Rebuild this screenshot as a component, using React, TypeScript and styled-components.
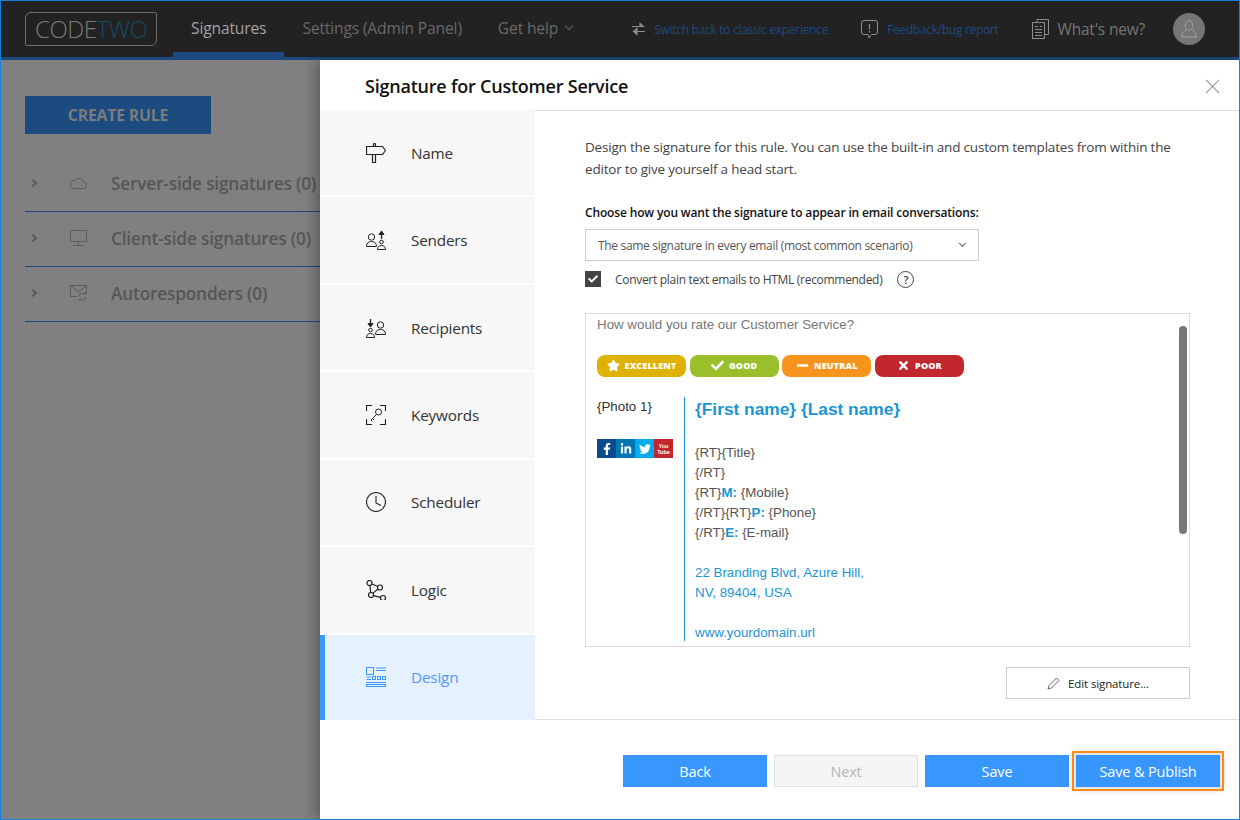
import React from 'react'
import styled, { createGlobalStyle } from 'styled-components'
import { FaStar, FaCheck, FaMinus, FaTimes, FaFacebookF, FaLinkedinIn, FaTwitter } from 'react-icons/fa'

const GlobalStyle = createGlobalStyle`
  html, body { margin: 0; padding: 0; background: #808080; }
  * { box-sizing: border-box; }
  body { font-family: "Open Sans", "Noto Sans", sans-serif; }
`

const Icon: React.FC<{ size?: number; w?: number; h?: number; color?: string; children: React.ReactNode }> = ({ size = 20, w, h, color = '#222', children }) => (
  <svg width={w || size} height={h || size} viewBox={`0 0 ${w || size} ${h || size}`} fill="none" stroke={color} strokeWidth="1" style={{ flex: 'none', display: 'block' }}>
    {children}
  </svg>
)

const SignpostIcon = () => (
  <Icon>
    <path d="M7.5 3.5V1.5a1 1 0 0 1 2 0V3.5M.5 3.5H16.5L19.5 7.5L16.5 11.5H.5ZM6.5 11.5V19.5H9.5V11.5" strokeWidth="1.2" />
  </Icon>
)
const SendersIcon = () => (
  <Icon>
    <circle cx="5.5" cy="7" r="3.2" />
    <path d="M.5 16.5c0-3.5 2-5 5-5s5 1.500 5 5Z" />
    <path d="M15.500 9V3" strokeWidth="1.300" />
    <path d="M13 4.500L15.500 1L18 4.500Z" fill="#222" />
    <circle cx="15.500" cy="12" r="1.800" />
    <path d="M11.500 19.500c0-2.500 1.500-4 4-4s4 1.500 4 4Z" />
  </Icon>
)
const RecipientsIcon = () => (
  <Icon>
    <circle cx="14.500" cy="7" r="3.200" />
    <path d="M9.500 16.500c0-3.500 2-5 5-5s5 1.500 5 5Z" />
    <path d="M4.500 1V6.500" strokeWidth="1.300" />
    <path d="M2 5.500L4.500 9L7 5.500Z" fill="#222" />
    <circle cx="4.500" cy="12" r="1.800" />
    <path d="M.5 19.500c0-2.500 1.500-4 4-4s4 1.500 4 4Z" />
  </Icon>
)
const KeywordsIcon = () => (
  <Icon>
    <path d="M.5 6V.5H6M14 .5H19.500V6M.5 14V19.500H6M14 19.500H19.500V14" strokeWidth="1.200" />
    <circle cx="12.500" cy="7" r="3" />
    <path d="M10.500 9.500L5 15M6.500 13.500L8 15M5 15L6.500 16.500" />
  </Icon>
)
const ClockIcon = () => (
  <Icon>
    <circle cx="10" cy="10" r="9.500" strokeWidth="1.100" />
    <path d="M10 4V11L15 13.500" strokeWidth="1.100" />
  </Icon>
)
const LogicIcon = () => (
  <Icon>
    <circle cx="3.500" cy="3" r="2.500" strokeWidth="1.200" />
    <circle cx="14" cy="7.500" r="2.500" strokeWidth="1.200" />
    <circle cx="5" cy="15" r="2.500" strokeWidth="1.200" />
    <circle cx="17" cy="18" r="2.500" strokeWidth="1.200" />
    <path d="M6 4L11.700 6.500M3.900 5.500L4.700 12.500M6.800 13.400L12 9M7.400 15.700L14.600 17.400" strokeWidth="1.200" />
  </Icon>
)
const DesignIcon = () => (
  <Icon color="#3896ff">
    <rect x=".5" y=".5" width="7" height="7" />
    <path d="M10 1H20M10 3.500H20M.5 10H5M.5 12.500H5" strokeWidth="1" />
    <rect x="6.500" y="9.500" width="3" height="3" />
    <rect x="11.500" y="9.500" width="3" height="3" />
    <rect x="16.500" y="9.500" width="3" height="3" />
    <path d="M0 15.500H20" />
    <rect x=".5" y="17.500" width="19" height="2" />
  </Icon>
)
const CloudIcon = () => (
  <Icon w={17} h={12} color="#5c5c5c">
    <path d="M4 11.500H13.500a3 3 0 0 0 .5-6A5 5 0 0 0 5 3.500a4 4 0 0 0-1 8Z" />
  </Icon>
)
const MonitorIcon = () => (
  <Icon w={17} h={16} color="#5c5c5c">
    <rect x=".5" y=".5" width="16" height="11" />
    <path d="M8.500 11.500V15M3.500 15.500H13.500" />
  </Icon>
)
const AutoIcon = () => (
  <Icon w={17} h={16} color="#5c5c5c">
    <path d="M7 11.500H.5V.5H16.500V8M.5 .5L8.500 7L16.500 .5" />
    <path d="M9 11a3 3 0 0 1 3-2.500H16M14.500 7L16 8.500L14.500 10M15.500 12a3 3 0 0 1-3 3H9M10.500 13.500L9 15L10.500 16.500" />
  </Icon>
)
const SwapIcon = () => (
  <Icon w={13} h={14} color="#8c8c8c">
    <path d="M0 4.500H10M8 1.500L11.500 4.500H8ZM13 9.500H3M5 6.500L1.500 9.500L5 12.500Z" fill="#8c8c8c" strokeWidth="1.200" />
  </Icon>
)
const FeedbackIcon = () => (
  <Icon w={17} h={19} color="#8c8c8c">
    <path d="M3 .5H14a2.500 2.500 0 0 1 2.500 2.500V12a2.500 2.500 0 0 1-2.500 2.500H10.500L8 18L7 14.500H3A2.500 2.500 0 0 1 .5 12V3A2.500 2.500 0 0 1 3 .5Z" />
    <path d="M8.500 4V9.500M8.500 11V12.500" strokeWidth="1.300" />
  </Icon>
)
const NewsIcon = () => (
  <Icon w={17} h={20} color="#8c8c8c">
    <path d="M5 3V.5H16.500V15.500H13" />
    <rect x=".5" y="3.500" width="12" height="16" />
    <path d="M3 7.500H6M3 10.500H10M3 13.500H10M3 16.500H10M8 7.500H10" />
  </Icon>
)
const PersonIcon = () => (
  <Icon w={16} h={18} color="#a3a3a3">
    <ellipse cx="8" cy="5.500" rx="3.800" ry="4.800" />
    <path d="M5.500 9.500C3 11 .8 13 .8 17H15.200C15.200 13 13 11 10.500 9.500" />
  </Icon>
)
const Chevron = styled.span<{ $color: string; $size?: number; $width?: number }>`
  display: inline-block;
  width: ${p => p.$size || 6}px;
  height: ${p => p.$size || 6}px;
  border-right: ${p => p.$width || 1}px solid ${p => p.$color};
  border-bottom: ${p => p.$width || 1}px solid ${p => p.$color};
  transform: rotate(45deg);
`

const Frame = styled.div`
  position: relative;
  width: 1240px;
  height: 820px;
  overflow: hidden;
  background: #808080;
  border: 1px solid #1a7fd8;
  display: flex;
  flex-direction: column;
`
const TopBar = styled.header`
  height: 59px;
  flex: none;
  background: #222;
  border-bottom: 3px solid #1c4a80;
  display: flex;
  align-items: stretch;
  padding-left: 24px;
`
const Logo = styled.div`
  align-self: flex-start;
  margin-top: 11px;
  width: 132px;
  height: 34px;
  border: 1px solid #6e6e6e;
  border-radius: 6px 2px 6px 2px;
  font-size: 24px;
  font-weight: 300;
  line-height: 32px;
  padding-left: 9px;
  color: #7a7a7a;
  letter-spacing: -0.5px;
  span { color: #174a66; }
`
const NavTabs = styled.nav`
  display: flex;
  margin-left: 16px;
`
const NavTab = styled.div<{ $active?: boolean }>`
  height: 56px;
  padding: 2px 18px 0;
  display: flex;
  align-items: center;
  gap: 8px;
  font-size: 15.600px;
  color: ${p => (p.$active ? '#a3a3a3' : '#696969')};
  border-bottom: 5px solid ${p => (p.$active ? '#1c4a80' : 'transparent')};
  letter-spacing: -0.15px;
  white-space: nowrap;
`
const TopActions = styled.div`
  margin-left: auto;
  display: flex;
  align-items: center;
  padding-right: 34px;
  height: 56px;
`
const TopLink = styled.a<{ $gap: number; $left: number }>`
  display: flex;
  align-items: center;
  gap: ${p => p.$gap}px;
  margin-left: ${p => p.$left}px;
  font-size: 12px;
  color: #1c4a80;
  letter-spacing: -0.3px;
  white-space: nowrap;
`
const WhatsNew = styled(TopLink)`
  font-size: 15.500px;
  color: #767676;
  letter-spacing: -0.2px;
`
const Avatar = styled.div`
  width: 32px;
  height: 32px;
  margin-left: 28px;
  border-radius: 50%;
  background: #767676;
  display: flex;
  align-items: center;
  justify-content: center;
`
const Page = styled.main`
  flex: 1;
  padding: 36px 0 0 24px;
`
const CreateRule = styled.div`
  width: 186px;
  height: 38px;
  background: #1c4b80;
  color: #7b7b7b;
  font-size: 15.800px;
  font-weight: 700;
  display: flex;
  align-items: center;
  justify-content: center;
  letter-spacing: -0.2px;
  margin-bottom: 23px;
`
const RuleRow = styled.div`
  height: 55px;
  border-bottom: 1px solid #1c4a80;
  padding-bottom: 2px;
  display: flex;
  align-items: center;
  font-size: 17.300px;
  font-weight: 600;
  color: #565656;
  letter-spacing: -0.2px;
  white-space: nowrap;
`
const RowChevron = styled.span`
  width: 45px;
  padding-left: 5px;
  span { transform: rotate(-45deg); display: block; }
`
const RowIcon = styled.span`
  width: 41px;
`
const Drawer = styled.section`
  position: absolute;
  left: 319px;
  top: 59px;
  right: 0;
  bottom: 0;
  background: #fff;
  box-shadow: -4px 0 12px rgba(0, 0, 0, 0.3);
  display: flex;
  flex-direction: column;
`
const DrawerTitle = styled.div`
  height: 50px;
  flex: none;
  padding: 2px 19px 0 45px;
  display: flex;
  align-items: center;
  justify-content: space-between;
  font-size: 18px;
  font-weight: 600;
  color: #111;
  letter-spacing: -0.22px;
`
const CloseButton = styled.svg`
  width: 15px;
  height: 15px;
  stroke: #9c9c9c;
  stroke-width: 1.300;
`
const DrawerBody = styled.div`
  flex: 1;
  display: flex;
  min-height: 0;
`
const Steps = styled.aside`
  position: relative;
  width: 215px;
  flex: none;
  display: flex;
  flex-direction: column;
  gap: 2px;
  margin-bottom: -1px;
`
const Step = styled.div<{ $active?: boolean }>`
  flex: 1;
  display: flex;
  align-items: center;
  gap: 25px;
  padding-left: ${p => (p.$active ? 41 : 46)}px;
  background: ${p => (p.$active ? '#e5f1ff' : '#f7f7f7')};
  border-left: ${p => (p.$active ? '5px solid #3896ff' : 'none')};
  color: ${p => (p.$active ? '#4f98ff' : '#333')};
  font-size: 15.300px;
  letter-spacing: -0.2px;
`
const Content = styled.div`
  flex: 1;
  padding: 25px 49px 0 50px;
  border-top: 1px solid #ddd;
`
const Intro = styled.p`
  margin: 0;
  font-size: 13.500px;
  line-height: 22px;
  color: #444;
  letter-spacing: -0.2px;
`
const FieldLabel = styled.div`
  margin-top: 24px;
  font-size: 12px;
  line-height: 18px;
  font-weight: 600;
  color: #111;
  letter-spacing: -0.15px;
`
const SelectBox = styled.div`
  margin-top: 7px;
  width: 394px;
  height: 32px;
  border: 1px solid #ccc;
  padding: 0 13px 0 12px;
  display: flex;
  align-items: center;
  justify-content: space-between;
  font-size: 12px;
  color: #555;
  letter-spacing: -0.32px;
`
const CheckRow = styled.div`
  margin-top: 10px;
  height: 16px;
  display: flex;
  align-items: center;
  font-size: 12px;
  color: #444;
  letter-spacing: -0.3px;
`
const CheckBox = styled.span`
  width: 16px;
  height: 16px;
  background: #444;
  color: #fff;
  display: flex;
  align-items: center;
  justify-content: center;
  font-size: 10px;
  margin-right: 14px;
`
const HelpBadge = styled.span`
  width: 17px;
  height: 17px;
  border: 1px solid #444;
  border-radius: 50%;
  margin-left: 15px;
  display: flex;
  align-items: center;
  justify-content: center;
  font-size: 11px;
  font-weight: 600;
  color: #444;
`
const Preview = styled.div`
  position: relative;
  margin-top: 26px;
  height: 334px;
  border: 1px solid #ddd;
  padding: 0 11px;
  font-family: "Liberation Sans", Arial, sans-serif;
  overflow: hidden;
`
const Scrollbar = styled.div`
  position: absolute;
  top: 12px;
  right: 2px;
  width: 8px;
  height: 208px;
  border-radius: 4px;
  background: #777;
`
const Question = styled.div`
  font-size: 13.330px;
  line-height: 20px;
  padding-top: 1px;
  height: 20px;
  color: #777;
`
const Pills = styled.div`
  margin-top: 21px;
  display: flex;
  gap: 3.670px;
`
const Pill = styled.div<{ $bg: string }>`
  width: 89px;
  height: 22px;
  border-radius: 8px;
  padding-bottom: 1px;
  background: ${p => p.$bg};
  color: #fff;
  display: flex;
  align-items: center;
  justify-content: center;
  gap: 5px;
  font-family: "Open Sans", sans-serif;
  font-size: 9px;
  font-weight: 800;
  letter-spacing: 0.15px;
`
const SigRow = styled.div`
  margin-top: 20px;
  display: flex;
`
const SigLeft = styled.div`
  width: 87px;
  flex: none;
  font-size: 13.330px;
  line-height: 20px;
  color: #333;
`
const Socials = styled.div`
  margin-top: 22px;
  display: flex;
`
const Social = styled.span<{ $bg: string }>`
  width: 19px;
  height: 19px;
  background: ${p => p.$bg};
  color: #fff;
  font-size: 12px;
  display: flex;
  align-items: center;
  justify-content: center;
`
const YouTube = styled(Social)`
  flex-direction: column;
  font-family: "Liberation Sans", sans-serif;
  font-size: 5.500px;
  font-weight: 700;
  line-height: 6px;
`
const SigRight = styled.div`
  border-left: 1px solid #1b95d3;
  padding-left: 10px;
  width: 300px;
  height: 244px;
`
const SigName = styled.div`
  font-size: 17.330px;
  line-height: 24px;
  font-weight: 700;
  color: #1b95d3;
  margin-bottom: 22px;
`
const SigLine = styled.div<{ $blue?: boolean }>`
  font-size: 13.330px;
  line-height: 20px;
  min-height: 20px;
  color: ${p => (p.$blue ? '#1b95d3' : '#555')};
  b { color: #1b95d3; }
`
const EditRow = styled.div`
  display: flex;
  justify-content: flex-end;
  margin-top: 20px;
`
const EditButton = styled.div`
  width: 184px;
  height: 32px;
  border: 1px solid #ccc;
  display: flex;
  align-items: center;
  justify-content: center;
  gap: 8px;
  font-size: 11.500px;
  color: #222;
  letter-spacing: -0.12px;
`
const Footer = styled.footer`
  height: 100px;
  flex: none;
  border-top: 1px solid #ddd;
  padding: 35px 19px 0 0;
  display: flex;
  justify-content: flex-end;
  gap: 7px;
`
const Button = styled.div<{ $disabled?: boolean; $focus?: boolean }>`
  width: 144px;
  height: 32px;
  display: flex;
  align-items: center;
  justify-content: center;
  font-size: 14.500px;
  letter-spacing: -0.15px;
  background: ${p => (p.$disabled ? '#f5f5f5' : '#3896ff')};
  color: ${p => (p.$disabled ? '#b5b5b5' : '#fff')};
  border: ${p => (p.$disabled ? '1px solid #e0e0e0' : 'none')};
  ${p => p.$focus && 'outline: 2px solid #ff8a1c; outline-offset: 2px; box-shadow: 0 0 0 2px #e6e6e6, 0 0 8px 2px rgba(0,0,0,.2); '}
`

const steps = [
  { label: 'Name', icon: <SignpostIcon /> },
  { label: 'Senders', icon: <SendersIcon /> },
  { label: 'Recipients', icon: <RecipientsIcon /> },
  { label: 'Keywords', icon: <KeywordsIcon /> },
  { label: 'Scheduler', icon: <ClockIcon /> },
  { label: 'Logic', icon: <LogicIcon /> },
  { label: 'Design', icon: <DesignIcon />, active: true },
]

const rules = [
  { label: 'Server-side signatures (0)', icon: <CloudIcon /> },
  { label: 'Client-side signatures (0)', icon: <MonitorIcon /> },
  { label: 'Autoresponders (0)', icon: <AutoIcon /> },
]

const App: React.FC = () => {
  return (
    <Frame>
      <GlobalStyle />
      <TopBar>
        <Logo>CODE<span>TWO</span></Logo>
        <NavTabs>
          <NavTab $active>Signatures</NavTab>
          <NavTab>Settings (Admin Panel)</NavTab>
          <NavTab>Get help <Chevron $color="#696969" style={{ marginTop: -3 }} /></NavTab>
        </NavTabs>
        <TopActions>
          <TopLink $gap={9} $left={0}><SwapIcon />Switch back to classic experience</TopLink>
          <TopLink $gap={9} $left={33}><FeedbackIcon />Feedback/bug report</TopLink>
          <WhatsNew $gap={9} $left={33}><NewsIcon />What's new?</WhatsNew>
          <Avatar><PersonIcon /></Avatar>
        </TopActions>
      </TopBar>
      <Page>
        <CreateRule>CREATE RULE</CreateRule>
        {rules.map(rule => (
          <RuleRow key={rule.label}>
            <RowChevron><Chevron $color="#5c5c5c" $width={2} /></RowChevron>
            <RowIcon>{rule.icon}</RowIcon>
            {rule.label}
          </RuleRow>
        ))}
      </Page>
      <Drawer>
        <DrawerTitle>
          Signature for Customer Service
          <CloseButton viewBox="0 0 16 16"><path d="M1 1L15 15M15 1L1 15" /></CloseButton>
        </DrawerTitle>
        <DrawerBody>
          <Steps>
            {steps.map(step => (
              <Step key={step.label} $active={step.active}>{step.icon}{step.label}</Step>
            ))}
          </Steps>
          <Content>
            <Intro>Design the signature for this rule. You can use the built-in and custom templates from within the editor to give yourself a head start.</Intro>
            <FieldLabel>Choose how you want the signature to appear in email conversations:</FieldLabel>
            <SelectBox>
              The same signature in every email (most common scenario)
              <Chevron $color="#666" $size={5} style={{ marginTop: -3 }} />
            </SelectBox>
            <CheckRow>
              <CheckBox><FaCheck /></CheckBox>
              Convert plain text emails to HTML (recommended)
              <HelpBadge>?</HelpBadge>
            </CheckRow>
            <Preview>
              <Question>How would you rate our Customer Service?</Question>
              <Pills>
                <Pill $bg="#dfb200"><FaStar size={13} />EXCELLENT</Pill>
                <Pill $bg="#9bbf2b"><FaCheck size={13} />GOOD</Pill>
                <Pill $bg="#f7941e"><FaMinus size={13} />NEUTRAL</Pill>
                <Pill $bg="#c1272d"><FaTimes size={13} />POOR</Pill>
              </Pills>
              <SigRow>
                <SigLeft>
                  {'{Photo 1}'}
                  <Socials>
                    <Social $bg="#0b4a8c"><FaFacebookF /></Social>
                    <Social $bg="#0077b5"><FaLinkedinIn /></Social>
                    <Social $bg="#00aced"><FaTwitter /></Social>
                    <YouTube $bg="#c1272d"><span>You</span><span>Tube</span></YouTube>
                  </Socials>
                </SigLeft>
                <SigRight>
                  <SigName>{'{First name} {Last name}'}</SigName>
                  <SigLine>{'{RT}{Title}'}</SigLine>
                  <SigLine>{'{/RT}'}</SigLine>
                  <SigLine>{'{RT}'}<b>M:</b> {'{Mobile}'}</SigLine>
                  <SigLine>{'{/RT}{RT}'}<b>P:</b> {'{Phone}'}</SigLine>
                  <SigLine>{'{/RT}'}<b>E:</b> {'{E-mail}'}</SigLine>
                  <SigLine />
                  <SigLine $blue>22 Branding Blvd, Azure Hill,</SigLine>
                  <SigLine $blue>NV, 89404, USA</SigLine>
                  <SigLine />
                  <SigLine $blue>www.yourdomain.url</SigLine>
                </SigRight>
              </SigRow>
              <Scrollbar />
            </Preview>
            <EditRow>
              <EditButton>
                <Icon w={13} h={13} color="#666">
                  <path d="M1 12L2 8.500L9.500 1L12 3.500L4.500 11Z" />
                </Icon>
                Edit signature...
              </EditButton>
            </EditRow>
          </Content>
        </DrawerBody>
        <Footer>
          <Button>Back</Button>
          <Button $disabled>Next</Button>
          <Button>Save</Button>
          <Button $focus>Save &amp; Publish</Button>
        </Footer>
      </Drawer>
    </Frame>
  )
}

export default App
